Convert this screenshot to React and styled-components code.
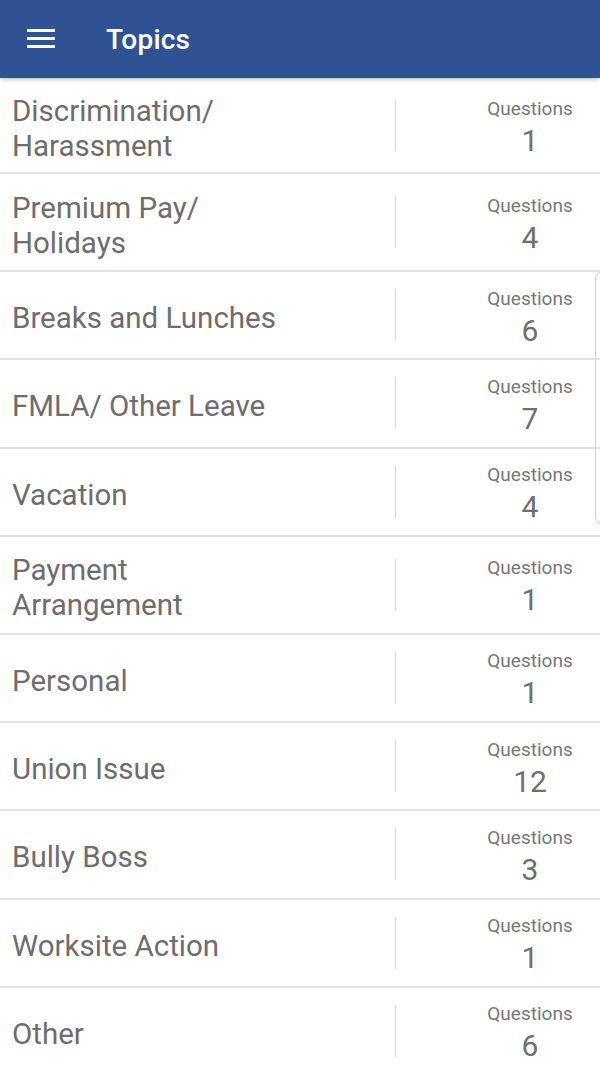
import React from 'react';
import styled, { createGlobalStyle } from 'styled-components';

const GlobalStyle = createGlobalStyle`
  html, body {
    margin: 0;
    padding: 0;
    background: #fff;
    font-family: Roboto, "Noto Sans", Arial, sans-serif;
  }
  * {
    box-sizing: border-box;
  }
`;

const Page = styled.div`
  position: relative;
  width: 600px;
  height: 1067px;
  overflow: hidden;
  background: #fff;
`;

const AppBar = styled.header`
  position: relative;
  z-index: 2;
  height: 78px;
  display: flex;
  align-items: center;
  background-color: #2e5293;
  box-shadow: 0 1px 4px rgba(0, 0, 0, 0.3);
`;

const MenuButton = styled.div`
  width: 28px;
  margin-left: 27px;
  margin-top: -2px;
  display: flex;
  flex-direction: column;
  gap: 5px;

  span {
    display: block;
    height: 3px;
    background: #fff;
  }
`;

const Title = styled.h1`
  margin: 0 0 0 51px;
  font-size: 28px;
  font-weight: 500;
  color: #fff;
  letter-spacing: 0.2px;
`;

const List = styled.div`
  display: flex;
  flex-direction: column;
`;

// first row sits partly under the app bar shadow, so it is a bit shorter
const Row = styled.div`
  display: flex;
  align-items: center;
  flex-shrink: 0;
  height: ${(p) => p.h}px;
  border-bottom: 2px solid #e2e2e2;
`;

const TopicName = styled.div`
  flex: 1;
  padding-left: 12px;
  font-size: 29.5px;
  line-height: 35px;
  color: #6d6d6d;
  margin-top: 7px;
`;

const Divider = styled.div`
  width: 1px;
  height: 52px;
  background: #dcdcdc;
`;

const CountBox = styled.div`
  width: 140px;
  margin-left: 64px;
  text-align: center;
  color: #777;
  margin-top: 9px;
`;

const CountLabel = styled.div`
  font-size: 19px;
  line-height: 22px;
`;

const CountValue = styled.div`
  font-size: 30px;
  line-height: 42px;
  color: #6f6f6f;
`;

const ScrollHint = styled.div`
  position: absolute;
  top: 271px;
  right: -12px;
  width: 17px;
  height: 254px;
  border: 1px solid #cfcfcf;
  border-radius: 8px;
`;

const topics = [
  { name: ['Discrimination/', 'Harassment'], count: 1 },
  { name: ['Premium Pay/', 'Holidays'], count: 4 },
  { name: ['Breaks and Lunches'], count: 6 },
  { name: ['FMLA/ Other Leave'], count: 7 },
  { name: ['Vacation'], count: 4 },
  { name: ['Payment', 'Arrangement'], count: 1 },
  { name: ['Personal'], count: 1 },
  { name: ['Union Issue'], count: 12 },
  { name: ['Bully Boss'], count: 3 },
  { name: ['Worksite Action'], count: 1 },
  { name: ['Other'], count: 6 },
];

const rowHeight = (t, i) => {
  if (i === 0) return 96;
  return t.name.length > 1 ? 98 : 88.25;
};

const App = () => {
  return (
    <>
      <GlobalStyle />
      <Page>
        <AppBar>
          <MenuButton>
            <span />
            <span />
            <span />
          </MenuButton>
          <Title>Topics</Title>
        </AppBar>
        <List>
          {topics.map((t, i) => (
            <Row key={i} h={rowHeight(t, i)}>
              <TopicName>
                {t.name.map((line, j) => (
                  <div key={j}>{line}</div>
                ))}
              </TopicName>
              <Divider />
              <CountBox>
                <CountLabel>Questions</CountLabel>
                <CountValue>{t.count}</CountValue>
              </CountBox>
            </Row>
          ))}
        </List>
        <ScrollHint />
      </Page>
    </>
  );
};

export default App;
